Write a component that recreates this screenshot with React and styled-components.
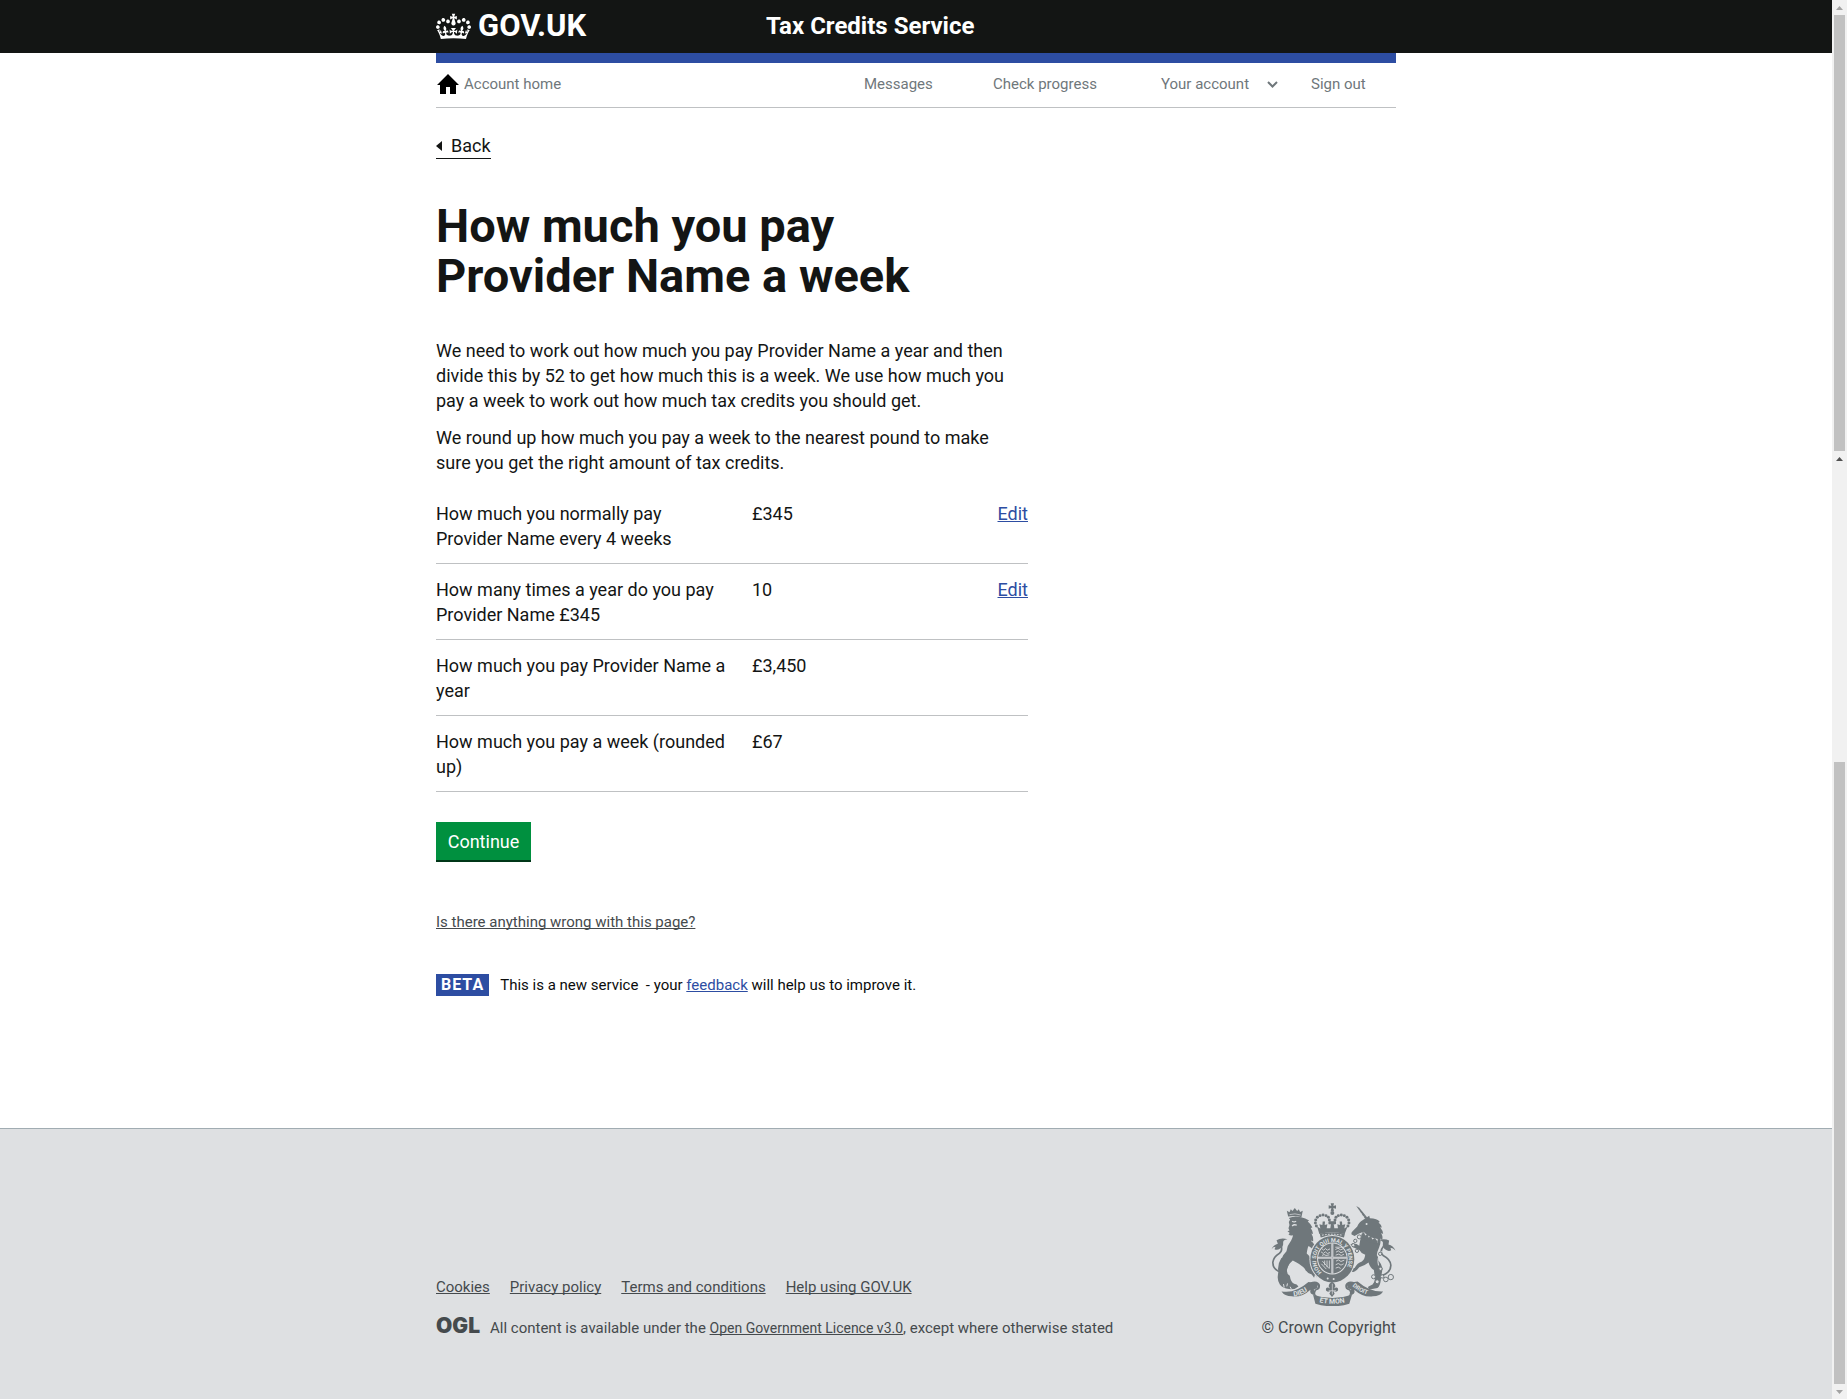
import React from "react";
import styled, { createGlobalStyle } from "styled-components";

const color = {
  ink: "#131514",
  blue: "#2d4da2",
  rule: "#bfc1c3",
  muted: "#6f777b",
  footerText: "#454a4d",
  footerBg: "#dee0e2",
  green: "#00903f",
  crest: "#6f777b",
};

const GlobalStyle = createGlobalStyle`
  *, *::before, *::after { box-sizing: border-box; }
  html, body, #root { margin: 0; min-height: 100vh; }
  body {
    background: #fff;
    color: ${color.ink};
    font: 18px/25px Roboto, "Liberation Sans", sans-serif;
  }
  h1, p, ul, dl, dd { margin: 0; padding: 0; }
  a { text-decoration-skip-ink: none; }
`;

/* ---------- Page frame ---------- */

const Frame = styled.div`
  display: flex;
  min-height: 100vh;
`;

const Page = styled.div`
  flex: 1;
  display: flex;
  flex-direction: column;
`;

const Container = styled.div`
  width: 100%;
  max-width: 960px;
  margin: 0 auto;
`;

const ScrollRail = styled.div`
  flex: 0 0 15px;
  display: flex;
  flex-direction: column;
  background: #f1f1f1;
`;

const RailButton = styled.div`
  flex: 0 0 15px;
  display: flex;
  align-items: center;
  justify-content: center;
  svg { display: block; }
`;

const RailThumb = styled.div`
  flex: ${(p) => p.$span};
  margin: 0 2px;
  background: #c1c1c1;
`;

const RailTrack = styled.div`
  flex: ${(p) => p.$span};
`;

/* ---------- Header ---------- */

const Header = styled.header`
  background: ${color.ink};
`;

const HeaderRow = styled(Container)`
  display: grid;
  grid-template-columns: 330px 1fr;
  align-items: center;
  min-height: 53px;
  padding-bottom: 1px;
`;

const Logo = styled.a`
  display: flex;
  align-items: center;
  gap: 7px;
  color: #fff;
  font-size: 31px;
  font-weight: 700;
  line-height: 30px;
  text-decoration: none;
`;

const ServiceName = styled.a`
  color: #fff;
  font-size: 24px;
  font-weight: 700;
  line-height: 24px;
  text-decoration: none;
`;

/* ---------- Account navigation ---------- */

const AccountNav = styled.nav`
  display: flex;
  justify-content: space-between;
  border-top: 10px solid ${color.blue};
  border-bottom: 1px solid ${color.rule};
  padding: 11px 0 13px;
  font-size: 15px;
  line-height: 20px;
`;

const NavLink = styled.a`
  color: ${color.muted};
  text-decoration: none;
`;

const HomeLink = styled(NavLink)`
  display: flex;
  align-items: center;
  gap: 5px;
`;

const NavItems = styled.ul`
  display: grid;
  grid-template-columns: 129px 168px 150px 85px;
  list-style: none;
`;

const NavItem = styled.li`
  display: flex;
  align-items: center;
  gap: 18px;
`;

/* ---------- Main ---------- */

const Main = styled.main`
  padding: 25px 0 132px;
`;

const BackLink = styled.a`
  display: flex;
  align-items: center;
  gap: 9px;
  width: fit-content;
  border-bottom: 1px solid ${color.ink};
  color: ${color.ink};
  text-decoration: none;
`;

const Column = styled.div`
  max-width: 592px;
`;

const Title = styled.h1`
  margin: 42px 0 37px;
  font-size: 47px;
  font-weight: 700;
  line-height: 50px;
`;

const Paragraph = styled.p`
  margin-bottom: 12px;
  padding-right: 10px;
`;

const Summary = styled.dl`
  margin: 13px 0 30px;
`;

const SummaryRow = styled.div`
  display: grid;
  grid-template-columns: 296px 1fr auto;
  column-gap: 20px;
  padding: 13px 0 12px;
  border-bottom: 1px solid ${color.rule};
`;

const TextLink = styled.a`
  color: ${color.blue};
  text-decoration: underline;
`;

const ContinueButton = styled.button`
  display: block;
  min-width: 95px;
  border: 0;
  margin: 0 0 50px;
  padding: 7px 10px 8px;
  background: ${color.green};
  box-shadow: inset 0 -2px 0 #003618;
  color: #fff;
  font: inherit;
  cursor: pointer;
`;

const ReportLink = styled.a`
  display: block;
  width: fit-content;
  color: ${color.footerText};
  font-size: 15px;
  line-height: 20px;
  text-decoration: underline;
`;

const PhaseBanner = styled.div`
  display: flex;
  align-items: center;
  gap: 11px;
  margin-top: 42px;
  color: #0b0c0c;
  font-size: 15px;
  line-height: 20px;
`;

const PhaseTag = styled.strong`
  padding: 1px 5px;
  background: ${color.blue};
  color: #fff;
  font-size: 16px;
  letter-spacing: 1px;
`;

/* ---------- Footer ---------- */

const Footer = styled.footer`
  flex: 1;
  border-top: 1px solid #a1acb2;
  background: ${color.footerBg};
  color: ${color.footerText};
  font-size: 15px;
  line-height: 20px;
`;

const FooterRow = styled(Container)`
  display: flex;
  justify-content: space-between;
  align-items: flex-end;
  padding: 74px 0 60px;
`;

const FooterLinks = styled.ul`
  display: flex;
  gap: 20px;
  margin-bottom: 19px;
  list-style: none;
`;

const FooterLink = styled.a`
  color: inherit;
  font-size: ${(p) => (p.$small ? "14px" : "inherit")};
  text-decoration: underline;
`;

const Licence = styled.div`
  display: flex;
  align-items: baseline;
  gap: 10px;
`;

const OglMark = styled.span`
  font: 900 21px/20px Inter, Roboto, sans-serif;
`;

const Copyright = styled.a`
  display: flex;
  flex-direction: column;
  align-items: flex-end;
  gap: 12px;
  color: inherit;
  font-size: 16px;
  text-decoration: none;
  svg { display: block; }
`;

/* ---------- Drawings ---------- */

const Crown = () => (
  <svg width="35" height="27" viewBox="0 0 132 97" aria-hidden="true">
    <path
      fill="#fff"
      d="M25 30.2c3.5 1.5 7.7-.2 9.1-3.7 1.5-3.6-.2-7.8-3.9-9.2-3.6-1.4-7.6.3-9.1 3.9-1.4 3.5.3 7.5 3.9 9zM9 39.5c3.6 1.5 7.8-.2 9.2-3.7 1.5-3.6-.2-7.8-3.9-9.1-3.6-1.5-7.6.2-9.1 3.8-1.4 3.5.3 7.5 3.8 9zM4.4 57.2c3.5 1.5 7.7-.2 9.1-3.8 1.5-3.6-.2-7.7-3.9-9.1-3.5-1.5-7.6.3-9.1 3.8-1.4 3.5.3 7.6 3.9 9.1zm38.3-21.4c3.5 1.5 7.7-.2 9.1-3.8 1.5-3.6-.2-7.7-3.9-9.1-3.6-1.5-7.6.3-9.1 3.8-1.3 3.6.4 7.7 3.9 9.1zm64.4-5.6c-3.6 1.5-7.8-.2-9.1-3.7-1.5-3.6.2-7.8 3.8-9.2 3.6-1.4 7.7.3 9.2 3.9 1.3 3.5-.4 7.5-3.9 9zm15.9 9.3c-3.6 1.5-7.7-.2-9.1-3.7-1.5-3.6.2-7.8 3.7-9.1 3.6-1.5 7.7.2 9.2 3.8 1.5 3.5-.3 7.5-3.8 9zm4.7 17.7c-3.6 1.5-7.8-.2-9.2-3.8-1.5-3.6.2-7.7 3.9-9.1 3.6-1.5 7.7.3 9.2 3.8 1.3 3.5-.4 7.6-3.9 9.1zM89.3 35.8c-3.6 1.5-7.8-.2-9.2-3.8-1.4-3.6.2-7.7 3.9-9.1 3.6-1.5 7.7.3 9.2 3.8 1.4 3.6-.3 7.7-3.9 9.1zM69.7 17.7l8.9 4.7V9.3l-8.9 2.8c-.2-.3-.5-.6-.9-.9L72.4 0H59.6l3.5 11.2c-.3.3-.6.5-.9.9l-8.8-2.8v13.1l8.8-4.7c.3.3.6.7.9.9l-5 15.4v.1c-.2.8-.4 1.6-.4 2.4 0 4.1 3.1 7.5 7 8.1h.2c.3 0 .7.1 1 .1.4 0 .7 0 1-.1h.2c4-.6 7.1-4.1 7.1-8.1 0-.8-.1-1.7-.4-2.4V34l-5.1-15.4c.4-.2.7-.6 1-.9zM66 92.8c16.9 0 32.8 1.1 47.1 3.2 4-16.9 8.9-26.7 14-33.5l-9.6-3.4c1 4.9 1.1 7.2 0 10.2-1.5-1.4-3-4.3-4.2-8.7L108.6 76c2.8-2 5-3.2 7.5-3.3-4.4 9.4-10 11.9-13.6 11.2-4.3-.8-6.3-4.6-5.6-7.9 1-4.7 5.7-5.9 8-.5 4.3-8.7-3-11.4-7.6-8.8 7.1-7.2 7.9-13.5 2.1-21.1-8 6.1-8.1 12.3-4.5 20.8-4.7-5.4-12.1-2.5-9.5 6.2 3.4-5.2 7.9-2 7.2 3.1-.6 4.3-6.4 7.8-13.5 7.2-10.3-.9-10.9-8-11.2-13.8 2.5-.5 7.1 1.8 11 7.3L80.2 60c-4.1 4.4-8 5.3-12.3 5.4 1.4-4.4 8-11.6 8-11.6H55.5s6.4 7.2 7.9 11.6c-4.2-.1-8-1-12.3-5.4l1.4 16.4c3.9-5.5 8.5-7.7 10.9-7.3-.3 5.8-.9 12.8-11.1 13.8-7.2.6-12.9-2.9-13.5-7.2-.7-5 3.8-8.3 7.1-3.1 2.7-8.7-4.6-11.6-9.4-6.2 3.7-8.5 3.6-14.7-4.6-20.8-5.8 7.6-5 13.9 2.2 21.1-4.7-2.6-11.9.1-7.7 8.8 2.3-5.5 7.1-4.2 8.1.5.7 3.3-1.3 7.1-5.7 7.9-3.5.7-9-1.8-13.5-11.2 2.5.1 4.7 1.3 7.5 3.3l-4.7-15.4c-1.2 4.4-2.7 7.2-4.3 8.7-1.1-3-.9-5.3 0-10.2l-9.5 3.4c5 6.9 9.9 16.7 14 33.5 14.8-2.1 30.8-3.2 47.7-3.2z"
    />
  </svg>
);

const HomeIcon = () => (
  <svg width="23" height="20" viewBox="0 0 23 20" aria-hidden="true">
    <path d="M12 0 23 11h-3v9h-6v-7h-4v7H4v-9H1z" />
  </svg>
);

const Chevron = () => (
  <svg width="11" height="7" viewBox="0 0 11 7" aria-hidden="true">
    <path d="M1 1 5.5 5.5 10 1" fill="none" stroke={color.muted} strokeWidth="2" />
  </svg>
);

const BackArrow = () => (
  <svg width="6" height="10" viewBox="0 0 6 10" aria-hidden="true">
    <path d="M6 0v10L0 5z" fill={color.ink} />
  </svg>
);

const RailArrow = ({ down, dark }) => (
  <svg width="7" height="4" viewBox="0 0 7 4" aria-hidden="true">
    <path d={down ? "M0 0h7L3.5 4z" : "M0 4h7L3.5 0z"} fill={dark ? "#505050" : "#a3a3a3"} />
  </svg>
);

const beads = [
  [151, 84], [148, 75], [149, 66], [154, 58], [162, 53], [171, 51], [180, 53], [187, 58],
  [246, 84], [249, 75], [248, 66], [243, 58], [235, 53], [226, 51], [217, 53], [210, 58],
  [190, 66], [207, 66], [192, 75], [205, 75],
];

const Crest = () => (
  <svg width="125" height="103" viewBox="15 15 375 310" fill={color.crest} role="img" aria-label="Royal coat of arms">
    <defs>
      <path id="motto-ring" d="M167 224a49 52 0 1 1 64 0" />
      <path id="motto-left" d="M83 296q28-2 52-24" />
      <path id="motto-mid" d="M154 312q45 12 92 0" />
      <path id="motto-right" d="M259 265q24 22 58 29" />
    </defs>

    {/* crown */}
    <path d="M194 16h10l-2 8 8-2v10l-8-2 2 10h-10l2-10-8 2V22l8 2z" />
    <circle cx="199" cy="45" r="6" />
    {beads.map(([x, y]) => (
      <circle key={`${x}-${y}`} cx={x} cy={y} r="4.5" />
    ))}
    <path d="M153 86l10 6-3-13 9 2 1-10 7 0-1 10 8-2-2 12 11 0 2-14-7 2v-9h22v9l-7-2 2 14 11 0-2-12 8 2-1-10 7 0 1 10 9-2-3 13 10-6-9 22q-37-8-76 0z" />
    <path d="M161 107q37-7 76 0l-3 12q-35-6-70 0z" />
    <path d="M168 112q30-6 62 0" fill="none" stroke={color.footerBg} strokeWidth="3" strokeDasharray="5 4" />

    {/* lion */}
    <path d="M66 56l-4-18 8 5 4-9 5 5 7-9 7 9 5-5 4 8 8-4-4 20q-18-6-40-2z" />
    <path d="M70 50q16-5 34 1" fill="none" stroke={color.footerBg} strokeWidth="2" />
    <path d="M68 60q18-8 37-2 13 2 24 10l-4 3q10 8 14 18l-5 1q6 9 7 18l-5-1q7 12 5 24l-6-3q0 13 6 18l-14-3q-5 18-5 24 8 5 10 16 4 21 18 28l6 2q6 14 2 22l-3-9-2 13-6-9-3 10-7-10q-17-6-21-17-12-14-36-25-16 14-17 26-3 14 8 20 3 20 13 24 9 0 13 8-10 10-28 8-20-3-28-14-8-11-6-27 2-19 8-29-4-9 2-18 5-16 16-26 2-17 14-32 4-8 6-16-9 3-14-3l4-4-7-5 6-2-3-7 3-10-2-9 4-7z" />
    <path d="M122 128q18 0 22 12 10 1 13 13l-5-3 1 11-8-7-3 9-5-12q-6-6-16-7z" />
    <path d="M46 224q-27-8-26-31 3-16 18-25 12-8 7-24" fill="none" stroke={color.crest} strokeWidth="5" />
    <path d="M16 154q7-13 19-16l-4-11q13-8 33-3-15 2-13 12 1 10-9 16-9 6-17 2l3-7q-7 0-12 7z" />
    <path d="M36 218q-2-20 10-38l22 20-14 34z" />
    <path d="M78 70q6 4 12 0m2 12q-8-4-14 2" fill="none" stroke={color.footerBg} strokeWidth="4" />
    <path d="M48 272l-8-7m14 4-2-10m10 7 2-9m12 18-4-8" stroke={color.footerBg} strokeWidth="3" />

    {/* unicorn */}
    <path d="M271 24l9 5 24 30-6 4z" />
    <path d="M276 43l5-4m2 12 5-4m2 12 5-4" stroke={color.footerBg} strokeWidth="2" />
    <path d="M300 60l10-7 2 8q22 0 30 11l-4 2q9 7 10 15l-5-1q8 10 9 20l-6-3q6 12 3 21l-6-4q3 14-3 26-7 15-7 24 4 3 5 16 9 10 12 24l-5 34q-2 18-10 25l-24 4q-7-4-3-9l12-6q8-9 7-20l-3-23q-12-8-16-23-14 11-28 14-8 12-18 15l-10-2q-3-7 5-9l9-1q8-16 22-20 8-5 10-20-12-4-17-14l-24-11-11 9q-3 9 8 17l13 5-6 10-18-8q-12-10-8-26-6-4-7-12l9-3 6 8 16-9q13-1 21 7l3-18 6-23q-11 4-23 11l-9-4q-2-6 3-10l14-14q5-14 17-20z" />
    <path d="M289 105q19 21 46 24" fill="none" stroke={color.footerBg} strokeWidth="11" />
    <path d="M287 108l7-6 4 11 7-5 3 11 8-4 3 10 8-5 8 11-2 6q-29-1-46-23z" />
    <path d="M340 236q36-9 35-34-2-18-22-28-14-12 0-29" fill="none" stroke={color.crest} strokeWidth="5" />
    <path d="M389 158q-7-15-21-18l2-12q-13-7-30-2 14 3 11 13-1 11 9 17 9 6 16 1l-2-7q8 1 15 8z" />
    <circle cx="302" cy="78" r="3" fill={color.footerBg} />
    <path d="M347 160q-15 20-9 43" fill="none" stroke={color.footerBg} strokeWidth="3" />
    <g fill={color.footerBg} stroke={color.crest} strokeWidth="3">
      <circle cx="280" cy="117" r="6" />
      <circle cx="268" cy="129" r="5" />
      <circle cx="262" cy="142" r="5" />
      <circle cx="273" cy="159" r="5" />
      <circle cx="343" cy="168" r="5" />
      <circle cx="344" cy="213" r="5" />
      <circle cx="323" cy="237" r="6" />
      <circle cx="334" cy="252" r="6" />
      <circle cx="349" cy="236" r="5" />
      <circle cx="360" cy="245" r="7" />
      <circle cx="375" cy="238" r="8" />
    </g>

    {/* garter and shield */}
    <ellipse cx="199" cy="184" rx="69" ry="73" fill={color.footerBg} />
    <ellipse cx="199" cy="184" rx="66" ry="70" />
    <ellipse cx="199" cy="182" rx="46" ry="48" fill={color.footerBg} />
    <ellipse cx="199" cy="182" rx="43" ry="45" />
    <g fill="none" stroke={color.footerBg}>
      <path d="M199 137v90M156 180h86" strokeWidth="6" />
      <path
        d="M167 152l6 5 5-5 6 5 8-4M165 162l7 5 6-5 6 5 8-3M168 173l6-3 6 3 10-2M208 148h27M208 155l8-4 8 5 9-4M210 163l7-4 8 6 8-4M209 172l9-3 8 4 8-4M210 190l7-4 8 5 10-4M209 201l8-4 8 5 8-4M209 211l8-3 7 4M169 190l20 22M166 198l15 16M190 188v24M183 188v20M176 188v14"
        strokeWidth="2.5"
      />
    </g>
    <path d="M199 139v86M158 180h82" stroke={color.crest} strokeWidth="1" />
    <text fill={color.footerBg} fontFamily="Roboto, sans-serif" fontWeight="700" fontSize="17">
      <textPath href="#motto-ring">HONI SOIT QUI MAL Y PENSE</textPath>
    </text>
    <circle cx="185" cy="242" r="3" fill={color.footerBg} />
    <circle cx="203" cy="244" r="3" fill={color.footerBg} />

    {/* ribbon */}
    <path d="M188 266q0-9 10-14 10 5 10 14l-4 6q8-6 12 0 2 8-6 10l-8-2 4 8-8 10-8-10 4-8-8 2q-8-2-6-10 4-6 12 0z" />
    <path d="M199 258v32M188 279h22" stroke={color.footerBg} strokeWidth="2" />
    <path d="M46 281q40 8 81-28l20 2q8 6 8 15l-12 6 6 15q-20 1-16-15-25 24-56 20-22-1-31-15z" />
    <path d="M352 281q-40 2-77-30l-25 4q-7 6-6 15l12 6-6 15q20 1 15-15 26 24 56 20 22-1 31-15z" />
    <path d="M132 254q24-8 30 8 2 14-12 16l-4 12q10 6 11 12l-16-12q2-16 14-20 4-10-12-8zM268 254q-24-8-30 8-2 14 12 16l4 12q-10 6-11 12l16-12q-2-16-14-20-4-10 12-8z" />
    <path d="M141 291q58 20 117 0l-8 27q-50 16-102 0z" />
    <g fill={color.footerBg} fontFamily="Roboto, sans-serif" fontWeight="700" fontSize="21">
      <text><textPath href="#motto-left">DIEU</textPath></text>
      <text><textPath href="#motto-mid" startOffset="6">ET MON</textPath></text>
      <text fontSize="18"><textPath href="#motto-right">DROIT</textPath></text>
    </g>
  </svg>
);

/* ---------- Content ---------- */

const rows = [
  { label: "How much you normally pay Provider Name every 4 weeks", value: "£345", editable: true },
  { label: "How many times a year do you pay Provider Name £345", value: "10", editable: true },
  { label: "How much you pay Provider Name a year", value: "£3,450" },
  { label: "How much you pay a week (rounded up)", value: "£67" },
];

const footerLinks = ["Cookies", "Privacy policy", "Terms and conditions", "Help using GOV.UK"];

export default function App() {
  return (
    <Frame>
      <GlobalStyle />
      <Page>
        <Header>
          <HeaderRow>
            <Logo href="#">
              <Crown />
              <span>GOV.UK</span>
            </Logo>
            <ServiceName href="#">Tax Credits Service</ServiceName>
          </HeaderRow>
        </Header>

        <Container>
          <AccountNav aria-label="Account">
            <HomeLink href="#">
              <HomeIcon />
              Account home
            </HomeLink>
            <NavItems>
              <NavItem><NavLink href="#">Messages</NavLink></NavItem>
              <NavItem><NavLink href="#">Check progress</NavLink></NavItem>
              <NavItem><NavLink href="#">Your account</NavLink><Chevron /></NavItem>
              <NavItem><NavLink href="#">Sign out</NavLink></NavItem>
            </NavItems>
          </AccountNav>

          <Main>
            <BackLink href="#">
              <BackArrow />
              Back
            </BackLink>
            <Column>
              <Title>
                How much you pay
                <br />
                Provider Name a week
              </Title>
              <Paragraph>
                We need to work out how much you pay Provider Name a year and then divide this by 52 to
                get how much this is a week. We use how much you pay a week to work out how much tax
                credits you should get.
              </Paragraph>
              <Paragraph>
                We round up how much you pay a week to the nearest pound to make sure you get the right
                amount of tax credits.
              </Paragraph>
              <Summary>
                {rows.map((row) => (
                  <SummaryRow key={row.label}>
                    <dt>{row.label}</dt>
                    <dd>{row.value}</dd>
                    {row.editable && (
                      <dd><TextLink href="#" aria-label={`Edit: ${row.label}`}>Edit</TextLink></dd>
                    )}
                  </SummaryRow>
                ))}
              </Summary>
              <ContinueButton type="button">Continue</ContinueButton>
              <ReportLink href="#">Is there anything wrong with this page?</ReportLink>
              <PhaseBanner>
                <PhaseTag>BETA</PhaseTag>
                <p>
                  This is a new service&nbsp; - your <TextLink href="#">feedback</TextLink> will help us
                  to improve it.
                </p>
              </PhaseBanner>
            </Column>
          </Main>
        </Container>

        <Footer>
          <FooterRow>
            <div>
              <FooterLinks>
                {footerLinks.map((label) => (
                  <li key={label}><FooterLink href="#">{label}</FooterLink></li>
                ))}
              </FooterLinks>
              <Licence>
                <OglMark>OGL</OglMark>
                <p>
                  All content is available under the{" "}
                  <FooterLink href="#" $small>Open Government Licence v3.0</FooterLink>, except where
                  otherwise stated
                </p>
              </Licence>
            </div>
            <Copyright href="#">
              <Crest />
              <span>© Crown Copyright</span>
            </Copyright>
          </FooterRow>
        </Footer>
      </Page>

      <ScrollRail aria-hidden="true">
        <RailButton><RailArrow /></RailButton>
        <RailThumb $span={436} />
        <RailButton><RailArrow dark /></RailButton>
        <RailTrack $span={296} />
        <RailThumb $span={622} />
        <RailButton><RailArrow down /></RailButton>
      </ScrollRail>
    </Frame>
  );
}
